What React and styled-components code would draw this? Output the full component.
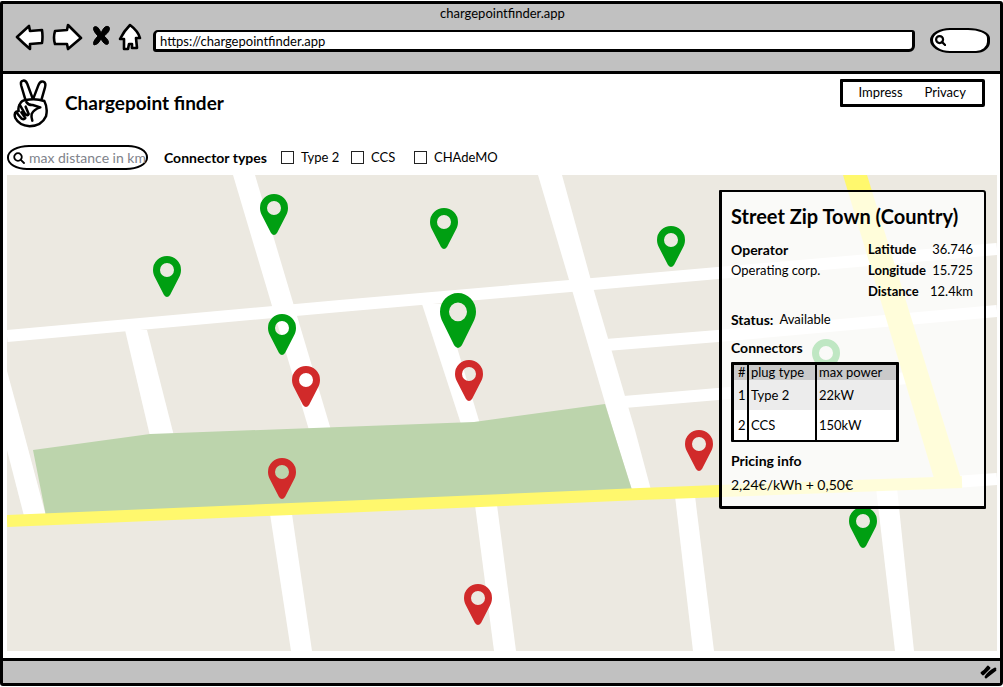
import React from "react";
import styled, { createGlobalStyle } from "styled-components";

const GlobalStyle = createGlobalStyle`
  *, *::before, *::after { box-sizing: border-box; }
  body {
    margin: 0;
    background: #fff;
    color: #000;
    font-family: Lato, "Liberation Sans", sans-serif;
    font-size: 13px;
    line-height: 21px;
  }
  h1, h2, h3, p, dl, dd { margin: 0; }
`;

const Page = styled.div`
  display: flex;
  min-height: 100vh;
  padding: 1px 0 1px 0;
`;

const BrowserWindow = styled.div`
  flex: 1;
  min-width: 0;
  display: flex;
  flex-direction: column;
  border: 3px solid #000;
  border-radius: 2px 3px 4px 3px;
`;

const Toolbar = styled.header`
  height: 70px;
  background: #c1c1c1;
  border-bottom: 3px solid #000;
  padding: 0 10px 0 12px;
`;

const WindowTitle = styled.div`
  height: 19px;
  line-height: 19px;
  text-align: center;
`;

const ToolbarRow = styled.div`
  height: 30px;
  display: flex;
  align-items: flex-end;
`;

const NavButtons = styled.nav`
  display: flex;
  gap: 8px;
  padding-bottom: 2px;
  margin-right: 10px;
`;

const IconButton = styled.button`
  width: ${(p) => p.$width}px;
  height: 28px;
  padding: 0;
  border: 0;
  background: none;
  svg { display: block; }
`;

const AddressInput = styled.input`
  flex: 1;
  min-width: 0;
  height: 22px;
  margin: 0 15px 1px 0;
  padding: 0 4px;
  border: 2px solid #000;
  border-width: 2px 3px 3px 3px;
  border-radius: 5px 3px 6px 3px;
  background: #fff;
  font: inherit;
  color: #000;
`;

const ToolbarSearch = styled.label`
  display: flex;
  align-items: center;
  width: 60px;
  height: 25px;
  padding-left: 2px;
  border: 3px solid #000;
  border-width: 2px 3px 2px 3px;
  border-radius: 20px 22px 14px 20px / 12px 10px 11px 13px;
  background: #fff;
  svg { flex: none; }
`;

const BareInput = styled.input`
  flex: 1;
  min-width: 0;
  width: 100%;
  padding: 0;
  border: 0;
  outline: 0;
  background: transparent;
  font: inherit;
  &::placeholder { color: #80838b; opacity: 1; }
`;

const Content = styled.main`
  flex: 1;
  display: flex;
  flex-direction: column;
  padding: 5px 3px 7px 4px;
`;

const Masthead = styled.div`
  display: flex;
  align-items: flex-start;
  height: 66px;
  padding: 0 12px 0 6px;
`;

const AppTitle = styled.h1`
  flex: 1;
  margin-left: 16px;
  font-size: 19px;
  line-height: 48px;
`;

const Menu = styled.nav`
  display: flex;
  gap: 22px;
  height: 28px;
  padding: 0 16px 0 15px;
  border: 3px solid #000;
  border-radius: 1px 2px 2px 1px;
  a {
    color: #000;
    text-decoration: none;
  }
`;

const Filters = styled.form`
  display: flex;
  align-items: center;
  height: 25px;
  margin-bottom: 5px;
`;

const DistanceField = styled.label`
  display: flex;
  align-items: center;
  gap: 4px;
  width: 141px;
  height: 25px;
  padding-left: 4px;
  border: 2px solid #000;
  border-radius: 22px 20px 22px 20px / 12px;
  background: #fff;
  font-size: 14px;
  svg { flex: none; }
`;

const ConnectorTypes = styled.fieldset`
  display: flex;
  align-items: center;
  margin: 0;
  padding: 0;
  border: 0;
`;

const GroupLabel = styled.span`
  width: 117px;
  margin-left: 16px;
  font-size: 14px;
  font-weight: 700;
`;

const CheckOption = styled.label`
  display: flex;
  align-items: center;
  gap: 7px;
  width: ${(p) => p.$width}px;
  white-space: nowrap;
`;

const Checkbox = styled.input`
  appearance: none;
  flex: none;
  width: 13px;
  height: 13px;
  margin: 0;
  border: 1px solid #222;
  background: #fff;
  &:checked { background: #222; }
`;

const MapArea = styled.section`
  position: relative;
  flex: 1;
  min-height: 476px;
  overflow: hidden;
  background: #ece9e1;
`;

const MapDrawing = styled.svg`
  position: absolute;
  inset: 0;
  width: 100%;
  height: 100%;
`;

const PinButton = styled.button`
  position: absolute;
  left: ${(p) => (p.$x / 990) * 100}%;
  top: ${(p) => (p.$y / 476) * 100}%;
  width: ${(p) => (p.$large ? 36 : 28)}px;
  height: ${(p) => (p.$large ? 55 : 41)}px;
  margin-left: ${(p) => (p.$large ? -18 : -14)}px;
  padding: 0;
  border: 0;
  background: none;
  color: ${(p) => (p.$free ? "#009f12" : "#d12a2a")};
  svg { display: block; width: 100%; height: 100%; }
`;

const DetailPanel = styled.aside`
  position: absolute;
  top: 15px;
  right: 11px;
  width: 267px;
  padding: 13px 11px 11px 9px;
  border: 3px solid #000;
  border-width: 2px 2px 3px 3px;
  border-radius: 1px 3px 1px 2px;
  background: rgba(255, 255, 255, 0.75);
`;

const PanelTitle = styled.h2`
  margin-bottom: 11px;
  font-size: 20px;
  line-height: 23px;
  white-space: nowrap;
`;

const Facts = styled.div`
  display: flex;
  justify-content: space-between;
  margin-bottom: 7px;
`;

const PanelLabel = styled.h3`
  font-size: 14px;
  line-height: 21px;
`;

const Coordinates = styled.dl`
  width: 105px;
  div { display: flex; justify-content: space-between; }
  dt { font-weight: 700; }
`;

const Status = styled.p`
  display: flex;
  gap: 6px;
  margin-bottom: 7px;
  b { font-size: 14px; }
`;

const ConnectorTable = styled.table`
  width: 168px;
  margin: 4px 0 8px;
  table-layout: fixed;
  border: 3px solid #000;
  border-width: 3px 3px 2px 3px;
  border-radius: 1px;
  border-spacing: 0;
  background: #fff;
  th, td {
    height: 30px;
    padding: 0 0 0 2px;
    text-align: left;
    font-weight: 400;
    white-space: nowrap;
  }
  th { height: 15px; line-height: 15px; background: #cacaca; }
  th + th, td + td { border-left: 2px solid #000; }
  th:first-child { width: 13px; }
  td:first-child, th:first-child { padding-left: 4px; }
  th:nth-child(2) { width: 68px; }
  tbody tr:first-child td { background: #ececec; }
`;

const Price = styled.p`
  margin-top: 3px;
  font-size: 14px;
`;

const StatusBar = styled.footer`
  display: flex;
  justify-content: flex-end;
  align-items: center;
  height: 25px;
  padding-right: 2px;
  border-top: 3px solid #000;
  background: #c1c1c1;
`;

const NAV_ICONS = [
  {
    name: "Back",
    width: 29,
    d: "M2 14 L14 3 L15 8 L27 7 Q28 14 27 20 L15 21 L15 26 Q8 20 2 14 Z",
  },
  {
    name: "Forward",
    width: 31,
    d: "M3 8 L15 7 L16 2 L29 15 Q23 20 16 26 L15 21 L3 21 Q1 15 3 8 Z",
  },
  {
    name: "Stop",
    width: 19,
    solid: true,
    d: "M3 4 Q7 2 10 10 Q14 1 18 4 Q20 8 13 13 Q19 18 17 21 Q14 23 10 16 Q7 22 3 22 Q1 19 7 13 Q1 7 3 4 Z",
  },
  {
    name: "Home",
    width: 25,
    d: "M12 2 Q20 8 22 15 L18 15 L19 25 L14 25 L14 21 L11 21 L10 26 L6 26 L6 16 L2 16 Q6 8 12 2 Z",
  },
];

const PINS = [
  { x: 267, y: 19, free: true },
  { x: 160, y: 81, free: true },
  { x: 437, y: 33, free: true },
  { x: 664, y: 51, free: true },
  { x: 275, y: 139, free: true },
  { x: 299, y: 191, free: false },
  { x: 462, y: 185, free: false },
  { x: 451, y: 118, free: true, large: true },
  { x: 275, y: 283, free: false },
  { x: 692, y: 255, free: false },
  { x: 471, y: 409, free: false },
  { x: 856, y: 332, free: true },
  { x: 819, y: 164, free: true },
];

const NavIcon = ({ icon }) => (
  <svg width={icon.width} height="28" aria-hidden="true">
    <path
      d={icon.d}
      fill={icon.solid ? "#000" : "#fff"}
      stroke="#000"
      strokeWidth={icon.solid ? 1 : 2.6}
      strokeLinejoin="round"
    />
  </svg>
);

const SearchIcon = ({ size, stroke }) => (
  <svg width={size} height={size} viewBox="0 0 12 12" aria-hidden="true">
    <circle cx="5" cy="5" r="3.8" fill="none" stroke="#000" strokeWidth={stroke} />
    <path d="M7.8 7.8 L11 11" stroke="#000" strokeWidth={stroke} strokeLinecap="round" />
  </svg>
);

const PeaceLogo = () => (
  <svg width="36" height="49" viewBox="40 235 108 147" aria-hidden="true">
    <g fill="#fff" stroke="#000" strokeWidth="7.5" strokeLinejoin="round" strokeLinecap="round">
      <path d="M78 300 L65 256 Q61 241 70 240 Q78 238 83 250 L100 296" />
      <path d="M100 296 L116 254 Q121 240 131 243 Q140 247 136 260 L124 302" />
      <path d="M62 308 Q66 299 78 298 Q108 292 134 301 Q145 322 139 347 Q126 376 90 377 Q58 374 47 352 Q42 338 50 333 L57 331 Q54 320 62 308 Z" />
      <path d="M60 312 L75 338 M50 335 Q58 346 66 354 Q73 358 77 352 L65 335 M75 338 Q84 348 87 340 L78 318" fill="none" />
      <path d="M80 304 Q86 314 99 313 L122 320 Q102 326 96 340 Q94 350 98 360" fill="none" />
    </g>
  </svg>
);

const PinIcon = () => (
  <svg viewBox="0 0 28 41" preserveAspectRatio="none" aria-hidden="true">
    <path
      fill="currentColor"
      fillRule="evenodd"
      d="M14 0 A14 14 0 0 1 28 14 C28 17 27 19.5 26 21.5 L17 39 Q14 43 11 39 L2 21.5 C1 19.5 0 17 0 14 A14 14 0 0 1 14 0 Z M14 7 A7 7 0 1 0 14 21 A7 7 0 1 0 14 7 Z"
    />
  </svg>
);

const StreetMap = () => (
  <MapDrawing viewBox="7 175 990 476" preserveAspectRatio="none" aria-hidden="true">
    <g fill="#fff">
      <path d="M233 175 H255 L331 430 H309 Z" />
      <path d="M125 330 H147 L174 436 H150 Z" />
      <path d="M7 371 L22 426 L46 516 H24 L7 450 Z" />
      <path d="M422 304 H444 L480 424 H461 Z" />
      <path d="M538 175 H562 L592 284 L635 430 L651 490 H632 L613 430 L572 290 Z" />
      <path d="M270 514 H292 L312 651 H291 Z" />
      <path d="M475 505 H497 L516 651 H494 Z" />
      <path d="M675 496 H695 L714 651 H693 Z" />
      <path d="M876 488 H897 L914 651 H895 Z" />
    </g>
    <g fill="none" stroke="#fff" strokeWidth="12">
      <path d="M7 336 L340 306 L570 286 L718 273 L997 249" />
      <path d="M606 345 L718 336 L997 311" />
      <path d="M624 402 L718 394 L908 378" />
      <path d="M955 482 L997 479" />
    </g>
    <path fill="#bcd4ac" d="M33 450 L150 434 L340 427 L474 422 L605 404 L632 490 L46 516 Z" />
    <path fill="none" stroke="#fff86d" strokeWidth="12" d="M7 521 L340 507 L640 494 L962 482" />
    <path fill="#fff86d" d="M843 175 H867 L962 482 L936 485 Z" />
  </MapDrawing>
);

export default function App() {
  return (
    <>
      <GlobalStyle />
      <Page>
        <BrowserWindow>
          <Toolbar>
            <WindowTitle>chargepointfinder.app</WindowTitle>
            <ToolbarRow>
              <NavButtons aria-label="Browser">
                {NAV_ICONS.map((icon) => (
                  <IconButton key={icon.name} type="button" aria-label={icon.name} $width={icon.width}>
                    <NavIcon icon={icon} />
                  </IconButton>
                ))}
              </NavButtons>
              <AddressInput aria-label="Address" defaultValue="https://chargepointfinder.app" />
              <ToolbarSearch>
                <SearchIcon size={11} stroke={2.4} />
                <BareInput aria-label="Search the web" />
              </ToolbarSearch>
            </ToolbarRow>
          </Toolbar>

          <Content>
            <Masthead>
              <PeaceLogo />
              <AppTitle>Chargepoint finder</AppTitle>
              <Menu aria-label="Site">
                <a href="#impress">Impress</a>
                <a href="#privacy">Privacy</a>
              </Menu>
            </Masthead>

            <Filters>
              <DistanceField>
                <SearchIcon size={12} stroke={1.8} />
                <BareInput aria-label="Maximum distance" placeholder="max distance in km" />
              </DistanceField>
              <ConnectorTypes aria-labelledby="connector-types">
                <GroupLabel id="connector-types">Connector types</GroupLabel>
                <CheckOption $width={70}>
                  <Checkbox type="checkbox" />
                  Type 2
                </CheckOption>
                <CheckOption $width={63}>
                  <Checkbox type="checkbox" />
                  CCS
                </CheckOption>
                <CheckOption $width={84}>
                  <Checkbox type="checkbox" />
                  CHAdeMO
                </CheckOption>
              </ConnectorTypes>
            </Filters>

            <MapArea aria-label="Map">
              <StreetMap />
              {PINS.map((pin) => (
                <PinButton
                  key={`${pin.x}-${pin.y}`}
                  type="button"
                  aria-label={pin.free ? "Available chargepoint" : "Occupied chargepoint"}
                  $x={pin.x}
                  $y={pin.y}
                  $free={pin.free}
                  $large={pin.large}
                >
                  <PinIcon />
                </PinButton>
              ))}
              <DetailPanel>
                <PanelTitle>Street Zip Town (Country)</PanelTitle>
                <Facts>
                  <div>
                    <PanelLabel>Operator</PanelLabel>
                    <p>Operating corp.</p>
                  </div>
                  <Coordinates>
                    <div><dt>Latitude</dt><dd>36.746</dd></div>
                    <div><dt>Longitude</dt><dd>15.725</dd></div>
                    <div><dt>Distance</dt><dd>12.4km</dd></div>
                  </Coordinates>
                </Facts>
                <Status><b>Status:</b> Available</Status>
                <PanelLabel>Connectors</PanelLabel>
                <ConnectorTable>
                  <thead>
                    <tr><th>#</th><th>plug type</th><th>max power</th></tr>
                  </thead>
                  <tbody>
                    <tr><td>1</td><td>Type 2</td><td>22kW</td></tr>
                    <tr><td>2</td><td>CCS</td><td>150kW</td></tr>
                  </tbody>
                </ConnectorTable>
                <PanelLabel>Pricing info</PanelLabel>
                <Price>2,24€/kWh + 0,50€</Price>
              </DetailPanel>
            </MapArea>
          </Content>

          <StatusBar>
            <svg width="18" height="14" aria-hidden="true">
              <path
                d="M2 8 Q5 6 8 2 M3 9 L9 3 M6 12 Q9 7 15 4 M6 12 L15 5"
                fill="none"
                stroke="#000"
                strokeWidth="2.8"
                strokeLinecap="round"
              />
            </svg>
          </StatusBar>
        </BrowserWindow>
      </Page>
    </>
  );
}
